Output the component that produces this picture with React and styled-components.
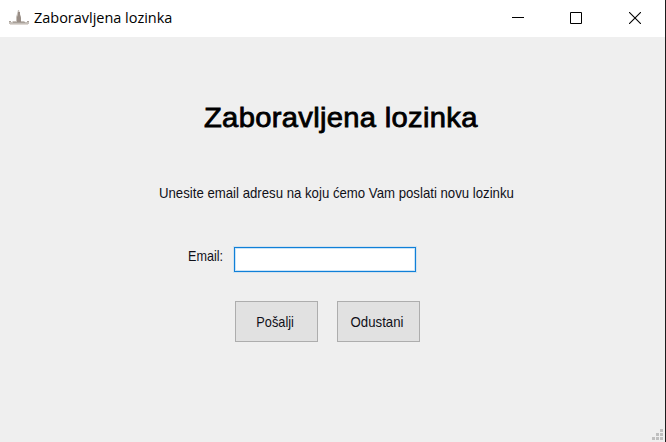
import React from "react";
import styled, { createGlobalStyle } from "styled-components";

const GlobalStyle = createGlobalStyle`
  * { box-sizing: border-box; }
  body { margin: 0; background: #efefef; overflow: hidden; }
`;

const Window = styled.main`
  display: flex;
  flex-direction: column;
  width: 666px;
  height: 442px;
  background: #efefef;
  border-right: 1px solid #1c1c1c;
  color: #000;
  font-family: "Liberation Sans", Arial, sans-serif;
`;

const TitleBar = styled.header`
  display: flex;
  align-items: center;
  flex: 0 0 37px;
  padding-left: 9px;
  background: #fff;
`;

const AppIcon = styled.svg`
  width: 20px;
  height: 18px;
  margin-right: 5px;
  margin-bottom: 2px;
`;

const Caption = styled.span`
  flex: 1;
  font: 14.5px/20px "Open Sans", sans-serif;
  letter-spacing: -0.02px;
  white-space: nowrap;
  padding-bottom: 2px;
`;

const WindowButton = styled.button`
  display: flex;
  align-items: center;
  justify-content: center;
  width: ${(p) => p.$width}px;
  height: 37px;
  padding: 0 0 1px;
  border: 0;
  background: transparent;
`;

const Form = styled.form`
  display: flex;
  flex-direction: column;
  flex: 1;
  padding-top: 63px;
`;

const Heading = styled.h1`
  width: max-content;
  margin: 0 0 0 204px;
  font-size: 27.5px;
  line-height: 36px;
  font-weight: 400;
  -webkit-text-stroke: 0.8px #000;
  letter-spacing: 0.3px;
  white-space: nowrap;
  transform-origin: left;
  transform: scaleX(${(p) => p.$stretch});
`;

const Text = styled.span`
  display: block;
  width: max-content;
  font-size: 15px;
  line-height: 18px;
  color: #101018;
  white-space: nowrap;
  transform-origin: ${(p) => p.$origin || "left"};
  transform: scaleX(${(p) => p.$stretch});
`;

const Message = styled.div`
  margin: 48px 0 0 159px;
`;

const Field = styled.label`
  display: flex;
  align-items: flex-start;
  margin: 45px 0 0 188px;
`;

const FieldName = styled.div`
  width: 46px;
`;

const Input = styled.input`
  width: 182px;
  height: 25px;
  padding: 2px 4px;
  border: 1px solid #1080d8;
  border-radius: 0;
  outline: none;
  background: #fff;
  box-shadow: 0 0 0 1px #d3e2ee, inset 0 0 0 1px #cbe4f7;
  font: inherit;
`;

const Actions = styled.div`
  display: flex;
  gap: 19px;
  margin: 29px 0 0 235px;
`;

const Button = styled.button`
  display: flex;
  align-items: center;
  justify-content: center;
  width: 83px;
  height: 41px;
  padding: 1px 3px 0 0;
  border: 1px solid #adadad;
  background: #e1e1e1;
  font-family: inherit;
`;

const GripRow = styled.footer`
  display: flex;
  justify-content: flex-end;
  flex: 0 0 13px;
  padding-right: 1px;
`;

export default function App() {
  return (
    <>
      <GlobalStyle />
      <Window>
        <TitleBar>
          <AppIcon viewBox="0 0 20 18" aria-hidden="true">
            <path d="M0 13h3l1-1h3V8l1-3 1-4h1l1 4 1 3v4h3l1 1h4v2H0z" fill="#c6c0ba" />
            <path d="M9 3h2v3l1 3v4H8V8l1-2z" fill="#998e86" />
            <path d="M0 12h2v1H0zM18 12h2v1h-2zM4 13h12v1H4z" fill="#a8a099" />
            <path d="M1 15h18v1H1z" fill="#ded8d3" />
          </AppIcon>
          <Caption>Zaboravljena lozinka</Caption>
          <WindowButton $width={58} type="button" aria-label="Minimize">
            <svg width="12" height="12" shapeRendering="crispEdges"><path d="M0 5h12v1H0z" /></svg>
          </WindowButton>
          <WindowButton $width={58} type="button" aria-label="Maximize">
            <svg width="12" height="12" fill="none" stroke="#000"><path d="M.5 .5h11v11H.5z" /></svg>
          </WindowButton>
          <WindowButton $width={60} type="button" aria-label="Close">
            <svg width="12" height="12" fill="none" stroke="#000" strokeWidth="1.1"><path d="M0 0l12 12M12 0L0 12" /></svg>
          </WindowButton>
        </TitleBar>
        <Form>
          <Heading $stretch={1.06}>Zaboravljena lozinka</Heading>
          <Message>
            <Text $stretch={0.88}>Unesite email adresu na koju ćemo Vam poslati novu lozinku</Text>
          </Message>
          <Field>
            <FieldName><Text $stretch={0.84}>Email:</Text></FieldName>
            <Input type="text" aria-label="Email" />
          </Field>
          <Actions>
            <Button type="button"><Text $origin="center" $stretch={0.85}>Pošalji</Text></Button>
            <Button type="button"><Text $origin="center" $stretch={0.88}>Odustani</Text></Button>
          </Actions>
        </Form>
        <GripRow>
          <svg width="12" height="12" fill="#bfbfbf" shapeRendering="crispEdges" aria-hidden="true">
            <path d="M8 0h3v3H8zM4 4h3v3H4zM8 4h3v3H8zM0 8h3v3H0zM4 8h3v3H4zM8 8h3v3H8z" />
          </svg>
        </GripRow>
      </Window>
    </>
  );
}
